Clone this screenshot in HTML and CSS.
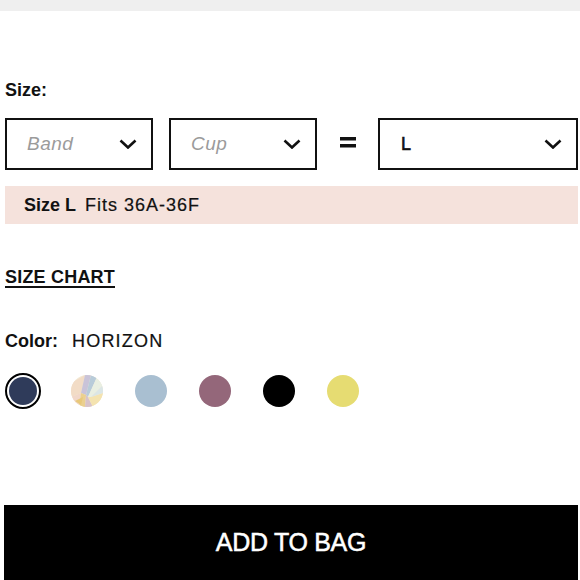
FILE: index.html
```html
<!DOCTYPE html>
<html>
<head>
    <title>Product Options</title>
    <link rel="stylesheet" href="styles.css">
</head>
<body>
    <div class="top-strip"></div>
    <div class="options">
        <div class="label size-label">Size:</div>
        <div class="size-row">
            <div class="select select-small">
                <span class="placeholder">Band</span>
                <svg class="chevron" viewBox="0 0 18 10"><path d="M1.5 1.5 9 8.5 16.5 1.5"/></svg>
            </div>
            <div class="select select-small">
                <span class="placeholder">Cup</span>
                <svg class="chevron" viewBox="0 0 18 10"><path d="M1.5 1.5 9 8.5 16.5 1.5"/></svg>
            </div>
            <div class="equals">
                <svg viewBox="0 0 16 11"><rect x="0" y="0" width="16" height="3.5"/><rect x="0" y="7" width="16" height="3.5"/></svg>
            </div>
            <div class="select select-wide">
                <span class="value">L</span>
                <svg class="chevron" viewBox="0 0 18 10"><path d="M1.5 1.5 9 8.5 16.5 1.5"/></svg>
            </div>
        </div>
        <div class="fit-note"><b>Size L</b><span>Fits 36A-36F</span></div>
        <a class="size-chart" href="#">SIZE CHART</a>
        <div class="label color-label"><b>Color:</b><span>HORIZON</span></div>
        <div class="swatches">
            <div class="swatch selected"><span style="background:#2f3b5a"></span></div>
            <div class="swatch">
                <svg viewBox="0 0 32 32">
                    <defs><clipPath id="dot"><circle cx="16" cy="16" r="16"/></clipPath></defs>
                    <g clip-path="url(#dot)">
                        <rect width="32" height="32" fill="#f3ead6"/>
                        <polygon points="0,8 14,0 10,18 0,22" fill="#f2dcc6"/>
                        <polygon points="14,0 20,0 15,20 10,18" fill="#c9c3d8"/>
                        <polygon points="20,0 26,2 17,22 15,20" fill="#b8cbd9"/>
                        <polygon points="26,2 32,10 20,22 17,22" fill="#e9efe2"/>
                        <polygon points="0,22 10,18 8,32 0,32" fill="#f1d7c9"/>
                        <polygon points="10,18 15,20 14,32 8,32" fill="#ebd08f"/>
                        <polygon points="15,20 17,22 22,32 14,32" fill="#d8c3c9"/>
                        <polygon points="17,22 20,22 32,18 32,32 22,32" fill="#f4e3b0"/>
                        <polygon points="20,22 32,10 32,18" fill="#dbe6e6"/>
                        <polygon points="4,26 12,22 10,30" fill="#e8c87a"/>
                    </g>
                </svg>
            </div>
            <div class="swatch"><span style="background:#a9bfd1"></span></div>
            <div class="swatch"><span style="background:#94677a"></span></div>
            <div class="swatch"><span style="background:#000000"></span></div>
            <div class="swatch"><span style="background:#e6dc72"></span></div>
        </div>
        <button class="add-to-bag">ADD TO BAG</button>
    </div>
</body>
</html>
```

FILE: styles.css
```css
body {
    margin: 0;
    padding: 0;
    background-color: #ffffff;
    color: #111111;
    font-family: "Liberation Sans", Arial, sans-serif;
    font-size: 18px;
    overflow: hidden;
}
.top-strip {
    height: 11px;
    background-color: #efefef;
}
.options {
    display: flex;
    flex-direction: column;
    padding: 0 2px 0 5px;
}
.label {
    line-height: 20px;
    font-size: 18px;
}
.size-label {
    margin-top: 69px;
    font-weight: bold;
}
.size-row {
    display: flex;
    align-items: center;
    margin-top: 18px;
    height: 52px;
}
.select {
    box-sizing: border-box;
    height: 52px;
    border: 2px solid #111111;
    display: flex;
    align-items: center;
    justify-content: space-between;
    padding: 0 14px 0 20px;
}
.select-small {
    width: 148px;
    margin-right: 16px;
}
.select-small:nth-child(2) {
    margin-right: 0;
}
.select-wide {
    flex-grow: 1;
}
.placeholder {
    color: #9b9b9b;
    font-style: italic;
    font-size: 19px;
    letter-spacing: 0.5px;
}
.value {
    font-size: 18px;
    padding-left: 1px;
    -webkit-text-stroke: 0.6px #111111;
}
.chevron {
    width: 18px;
    height: 10px;
    fill: none;
    stroke: #111111;
    stroke-width: 2.6;
}
.equals {
    width: 61px;
    display: flex;
    justify-content: center;
}
.equals svg {
    width: 16px;
    height: 11px;
    fill: #111111;
    margin-top: -4px;
}
.fit-note {
    margin-top: 16px;
    height: 38px;
    background-color: #f5e2dc;
    display: flex;
    align-items: center;
    padding-left: 19px;
    line-height: 20px;
}
.fit-note b {
    margin-right: 9px;
}
.fit-note span {
    letter-spacing: 1px;
    -webkit-text-stroke: 0.2px #111111;
}
.size-chart {
    align-self: flex-start;
    margin-top: 43px;
    line-height: 20px;
    color: #111111;
    font-weight: bold;
    letter-spacing: 0.2px;
    text-decoration: underline;
    text-decoration-thickness: 2px;
    text-underline-offset: 3px;
}
.color-label {
    margin-top: 44px;
}
.color-label span {
    margin-left: 14px;
    letter-spacing: 1.2px;
    -webkit-text-stroke: 0.2px #111111;
}
.swatches {
    display: flex;
    gap: 28px;
    margin-top: 22px;
}
.swatch {
    box-sizing: border-box;
    width: 36px;
    height: 36px;
    border-radius: 50%;
    display: flex;
    align-items: center;
    justify-content: center;
}
.swatch span {
    width: 32px;
    height: 32px;
    border-radius: 50%;
}
.swatch svg {
    width: 32px;
    height: 32px;
}
.swatch.selected {
    border: 2px solid #000000;
}
.swatch.selected span {
    width: 28px;
    height: 28px;
}
.add-to-bag {
    margin: 96px 0 0 -1px;
    height: 75px;
    border: none;
    background-color: #000000;
    color: #ffffff;
    font-family: "Liberation Sans", Arial, sans-serif;
    font-size: 25px;
    letter-spacing: -0.3px;
    -webkit-text-stroke: 0.5px #ffffff;
    cursor: pointer;
}
```
